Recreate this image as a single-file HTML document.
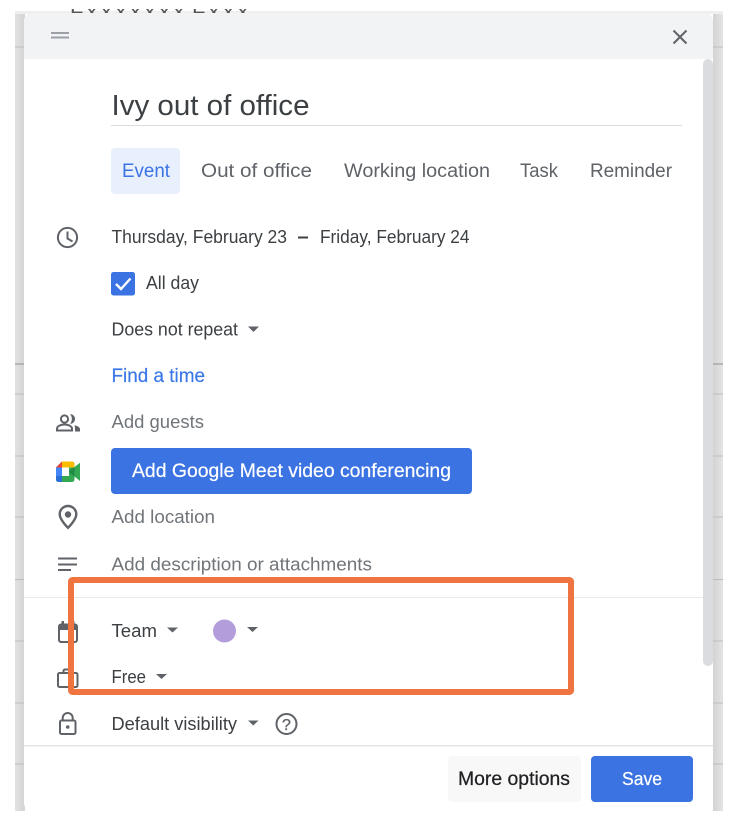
<!DOCTYPE html>
<html lang="en">
<head>
<meta charset="utf-8">
<title>Ivy out of office</title>
<style>
html,body{margin:0;padding:0;background:#fff;width:738px;height:832px;overflow:hidden}
svg{display:block}
text{font-family:"Liberation Sans",sans-serif;font-size:18px;fill:#3c4043}
.tab{fill:#5f6368;font-size:19px}
.ph{fill:#70757a}
.ic{fill:none;stroke:#5f6368;stroke-width:2}
.tri{fill:#5f6368}
</style>
</head>
<body>
<svg width="738" height="832" viewBox="0 0 738 832" xmlns="http://www.w3.org/2000/svg">
<defs>
<linearGradient id="gl" x1="0" x2="1" y1="0" y2="0"><stop offset="0" stop-color="#e2e2e2"/><stop offset="1" stop-color="#d3d3d3"/></linearGradient>
<linearGradient id="gr" x1="0" x2="1" y1="0" y2="0"><stop offset="0" stop-color="#d3d3d3"/><stop offset="1" stop-color="#e4e4e4"/></linearGradient>
<clipPath id="top"><rect x="0" y="9" width="738" height="4"/></clipPath>
</defs>

<!-- page behind the dialog -->
<rect x="15" y="11" width="10" height="800" fill="url(#gl)"/>
<rect x="713" y="11" width="10" height="800" fill="url(#gr)"/>
<rect x="15" y="11" width="708" height="3" fill="#efefef"/>
<g stroke="#bdbdbd" stroke-width="1">
<path d="M15 47h9M713 47h10M15 394h9M713 394h10M15 456h9M713 456h10M15 517h9M713 517h10M15 579.500h9M713 579.500h10M15 641h9M713 641h10M15 703h9M713 703h10M15 764h9M713 764h10"/>
<path d="M15 364h9M713 364h10" stroke="#aaa" stroke-width="1.500"/>
</g>
<text x="70" y="19" textLength="180" lengthAdjust="spacingAndGlyphs" clip-path="url(#top)" style="font-size:18px;fill:#555">EXXXXXXX EXXX</text>

<!-- dialog -->
<path d="M32 13H705a8 8 0 0 1 8 8V803a8 8 0 0 1-8 8H32a8 8 0 0 1-8-8V21a8 8 0 0 1 8-8z" fill="#fff"/>
<path d="M32 13H705a8 8 0 0 1 8 8V59H24V21a8 8 0 0 1 8-8z" fill="#f1f3f4"/>
<rect x="51" y="32" width="18" height="2" fill="#9aa0a6"/>
<rect x="51" y="36.500" width="18" height="2" fill="#9aa0a6"/>
<path d="M673.500 30.500L686.500 43.500M686.500 30.500L673.500 43.500" stroke="#5f6368" stroke-width="2" fill="none"/>
<rect x="24" y="597" width="689" height="1" fill="#e8eaed"/>
<rect x="703" y="59" width="10" height="607" rx="5" fill="#dadce0"/>

<!-- title -->
<text x="111.500" y="115" textLength="198" lengthAdjust="spacingAndGlyphs" style="font-size:29px;fill:#3c4043">Ivy out of office</text>
<rect x="111" y="125" width="571" height="1" fill="#dadce0"/>

<!-- tabs -->
<rect x="111" y="148" width="69" height="46" rx="4" fill="#e8f0fe"/>
<text class="tab" x="122" y="177" textLength="48" lengthAdjust="spacingAndGlyphs" style="fill:#3b73e3">Event</text>
<text class="tab" x="201" y="177" textLength="111" lengthAdjust="spacingAndGlyphs">Out of office</text>
<text class="tab" x="344" y="177" textLength="146" lengthAdjust="spacingAndGlyphs">Working location</text>
<text class="tab" x="520" y="177" textLength="38" lengthAdjust="spacingAndGlyphs">Task</text>
<text class="tab" x="590" y="177" textLength="82" lengthAdjust="spacingAndGlyphs">Reminder</text>

<!-- date -->
<circle class="ic" cx="67.500" cy="237.500" r="9.600"/>
<path class="ic" d="M67.500 231.500V238.500L72.500 241.500"/>
<text x="111.500" y="243" textLength="175.500" lengthAdjust="spacingAndGlyphs">Thursday, February 23</text>
<rect x="298" y="236.500" width="10" height="2" fill="#3c4043"/>
<text x="320" y="243" textLength="149.500" lengthAdjust="spacingAndGlyphs">Friday, February 24</text>

<!-- all day -->
<rect x="111" y="272" width="24" height="23.500" rx="2.500" fill="#3b73e3"/>
<path d="M116 284L121 289L130.500 278.500" fill="none" stroke="#fff" stroke-width="2.400"/>
<text x="146" y="289" textLength="53" lengthAdjust="spacingAndGlyphs">All day</text>

<text x="111.500" y="335.500" textLength="126.500" lengthAdjust="spacingAndGlyphs">Does not repeat</text>
<path class="tri" d="M248 326.500h11l-5.500 5.500z"/>

<text x="111.500" y="382" textLength="93.500" lengthAdjust="spacingAndGlyphs" style="font-size:19px;fill:#3b78e7;stroke:#3b78e7;stroke-width:.2">Find a time</text>

<!-- guests -->
<circle cx="64.500" cy="419" r="3.600" fill="none" stroke="#5f6368" stroke-width="2"/>
<path d="M57 430.500v-1.700c0-2.800 4-4.300 7.500-4.300s7.500 1.500 7.500 4.300v1.700z" fill="none" stroke="#5f6368" stroke-width="2"/>
<path d="M71 414.500a4.600 4.600 0 0 1 0 9c1.600-2.800 1.600-6.200 0-9z" fill="#5f6368" stroke="#5f6368" stroke-width=".8"/>
<path d="M74.500 425.200c3 .7 5.500 2 5.500 4v2.300h-5v-2.500c0-1.500-.1-2.600-.5-3.800z" fill="#5f6368"/>
<text class="ph" x="111.500" y="428" textLength="92.500" lengthAdjust="spacingAndGlyphs">Add guests</text>

<!-- meet -->
<path d="M62 461.500L56 467.500V479.500a2.500 2.500 0 0 0 2.500 2.500H72a2.500 2.500 0 0 0 2.500-2.500V464a2.500 2.500 0 0 0-2.500-2.500z" fill="#34a853"/>
<path d="M62 461.500H72a2.500 2.500 0 0 1 2.500 2.500V467.500H62z" fill="#fbbc04"/>
<path d="M62 461.500L56 467.500H62z" fill="#ea4335"/>
<path d="M56 467.500H62V476H56z" fill="#4285f4"/>
<path d="M56 476H62V482H58.500a2.500 2.500 0 0 1-2.500-2.500z" fill="#2a6fd6"/>
<path d="M74.500 467L80 462.800V481L74.500 476.500z" fill="#34a853"/>
<path d="M68.500 471.800L74.500 467V476.500z" fill="#1f8a45"/>
<path d="M62 467.500H69V471.800L69 476H62z" fill="#fff"/>

<rect x="111" y="448" width="361" height="46" rx="4" fill="#3b73e3"/>
<text x="132" y="477" textLength="319" lengthAdjust="spacingAndGlyphs" style="font-size:19px;fill:#fff;stroke:#fff;stroke-width:.2">Add Google Meet video conferencing</text>

<!-- location -->
<path class="ic" d="M68 506c-4.700 0-8.300 3.700-8.300 8.300 0 5.500 8.300 13.500 8.300 13.500s8.300-8 8.300-13.500c0-4.600-3.600-8.300-8.300-8.300z" style="stroke-width:2.400"/>
<circle cx="68" cy="514.500" r="3.200" fill="#5f6368"/>
<text class="ph" x="111.500" y="523" textLength="103.500" lengthAdjust="spacingAndGlyphs">Add location</text>

<!-- description -->
<path d="M58 558.500h19M58 564.500h19M58 570h13" stroke="#5f6368" stroke-width="2" fill="none"/>
<text class="ph" x="111.500" y="570.500" textLength="260.500" lengthAdjust="spacingAndGlyphs">Add description or attachments</text>

<!-- calendar -->
<path d="M59 626.500a2 2 0 0 1 2-2H75a2 2 0 0 1 2 2V640a2 2 0 0 1-2 2H61a2 2 0 0 1-2-2z" class="ic"/>
<rect x="59" y="624" width="18" height="6" fill="#5f6368"/>
<rect x="61.500" y="621" width="2.500" height="4" fill="#5f6368"/>
<rect x="72" y="621" width="2.500" height="4" fill="#5f6368"/>
<text x="111.500" y="637" textLength="45.500" lengthAdjust="spacingAndGlyphs">Team</text>
<path class="tri" d="M167 627.500h11l-5.500 5z"/>
<circle cx="224.500" cy="631" r="11.500" fill="#b39ddb"/>
<path class="tri" d="M247 627h11l-5.500 5z"/>

<!-- briefcase -->
<rect class="ic" x="58" y="673" width="19.500" height="14" rx="1.500"/>
<path class="ic" d="M63.500 673v-2a1.500 1.500 0 0 1 1.500-1.500h5.500a1.500 1.500 0 0 1 1.500 1.500v2"/>
<text x="111.500" y="683" textLength="34.500" lengthAdjust="spacingAndGlyphs">Free</text>
<path class="tri" d="M156 674h11l-5.500 5z"/>

<!-- visibility -->
<rect class="ic" x="60" y="720.500" width="15.500" height="13.500" rx="1.500"/>
<path class="ic" d="M62.700 720.500v-2.500a5 5 0 0 1 10 0v2.500"/>
<circle cx="67.700" cy="727" r="1.800" fill="#5f6368"/>
<text x="111.500" y="730" textLength="125.500" lengthAdjust="spacingAndGlyphs">Default visibility</text>
<path class="tri" d="M248 720.500h10.500l-5.250 5z"/>
<circle class="ic" cx="286.500" cy="724" r="10"/>
<text x="282" y="730" style="font-size:16px;fill:#5f6368;stroke:#5f6368;stroke-width:.3">?</text>

<!-- footer -->
<rect x="24" y="745" width="689" height="1.500" fill="#e6e6e6"/>
<rect x="448" y="756" width="133" height="46" rx="4" fill="#f8f8f8"/>
<text x="458" y="785" textLength="112" lengthAdjust="spacingAndGlyphs" style="font-size:19px;fill:#202124;stroke:#202124;stroke-width:.25">More options</text>
<rect x="591" y="756" width="102" height="46" rx="4" fill="#3b73e3"/>
<text x="622" y="785" textLength="40" lengthAdjust="spacingAndGlyphs" style="font-size:18px;fill:#fff;stroke:#fff;stroke-width:.2">Save</text>

<!-- highlight -->
<rect x="71" y="580" width="500" height="112" rx="1.500" fill="none" stroke="#f07440" stroke-width="6"/>
</svg>
</body>
</html>
